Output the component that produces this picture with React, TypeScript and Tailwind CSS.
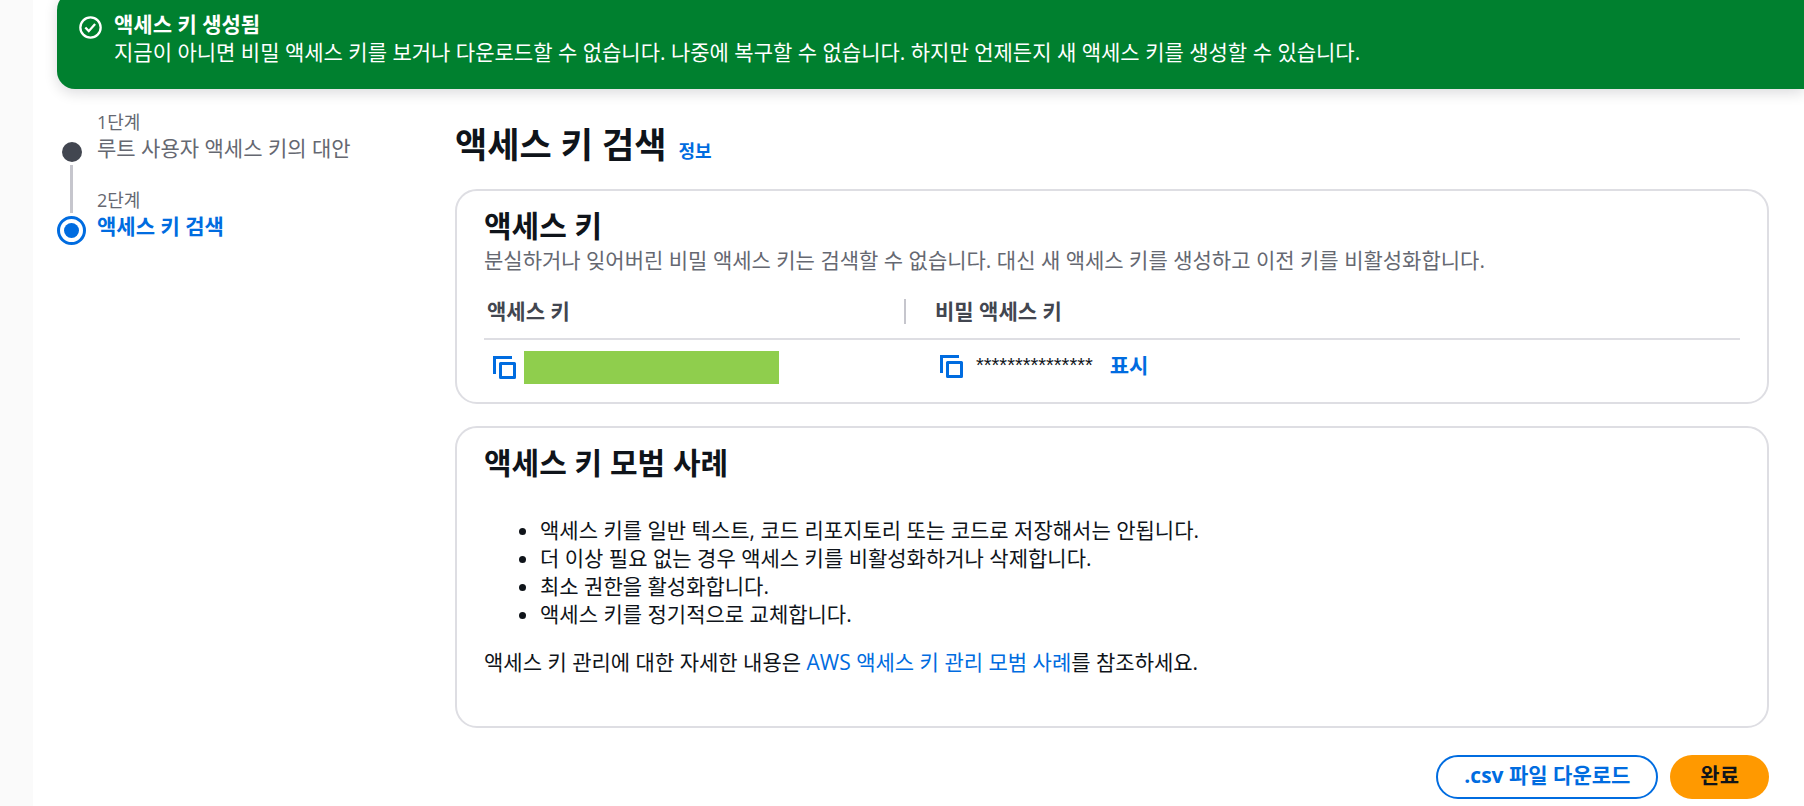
import type { ReactNode } from "react";

const practices = [
  "액세스 키를 일반 텍스트, 코드 리포지토리 또는 코드로 저장해서는 안됩니다.",
  "더 이상 필요 없는 경우 액세스 키를 비활성화하거나 삭제합니다.",
  "최소 권한을 활성화합니다.",
  "액세스 키를 정기적으로 교체합니다.",
];

function CopyButton({ label }: { label: string }) {
  return (
    <button type="button" aria-label={label} className="shrink-0 text-[#006ce0]">
      <svg width="24" height="24" viewBox="0 0 24 24" fill="none" stroke="currentColor" strokeWidth="3">
        <path d="M1.5 18V1.5H19" />
        <path d="M7.5 7.5h14v14h-14z" strokeLinejoin="round" />
      </svg>
    </button>
  );
}

function Card({ children }: { children: ReactNode }) {
  return (
    <section className="rounded-[22px] border-2 border-[#dedee3] bg-white px-[27px]">
      {children}
    </section>
  );
}

function Banner() {
  return (
    <div
      role="status"
      className="-mt-2 flex gap-3 rounded-l-[18px] bg-[#00802f] pt-[18px] pb-[23px] pl-[22px] text-white shadow-[0_4px_14px_rgba(0,7,22,0.14)]"
    >
      <svg className="mt-1.5 shrink-0" width="23" height="23" viewBox="0 0 24 24" fill="none" stroke="currentColor" strokeWidth="2.4">
        <circle cx="12" cy="12" r="10.6" />
        <path d="M6.6 12l3.6 3.8 6.6-7.4" />
      </svg>
      <div>
        <h2 className="font-bold">액세스 키 생성됨</h2>
        <p>
          지금이 아니면 비밀 액세스 키를 보거나 다운로드할 수 없습니다. 나중에 복구할 수 없습니다. 하지만 언제든지 새
          액세스 키를 생성할 수 있습니다.
        </p>
      </div>
    </div>
  );
}

function Steps() {
  return (
    <nav aria-label="단계" className="flex w-[398px] shrink-0 gap-[11px] pt-[21px]">
      <div className="flex w-[29px] flex-col items-center pt-8">
        <span className="size-5 rounded-full bg-[#424650]" />
        <span className="my-[3px] h-12 w-[3px] bg-[#c6c6cd]" />
        <span className="flex size-[29px] items-center justify-center rounded-full border-[3px] border-[#006ce0]">
          <span className="size-[15px] rounded-full bg-[#006ce0]" />
        </span>
      </div>
      <ol className="flex flex-col gap-[26px] text-[#656871]">
        <li>
          <div className="text-[18px] leading-6">1단계</div>
          <div>루트 사용자 액세스 키의 대안</div>
        </li>
        <li aria-current="step">
          <div className="text-[18px] leading-6">2단계</div>
          <div className="font-bold text-[#006ce0]">액세스 키 검색</div>
        </li>
      </ol>
    </nav>
  );
}

function KeyTable() {
  return (
    <table className="mt-[23px] w-full table-fixed text-left">
      <thead>
        <tr className="border-b-2 border-[#dedee3] text-[#424650]">
          <th className="w-[422px] pb-[13px] pl-[3px] font-bold">
            <div className="flex items-center justify-between">
              액세스 키
              <span className="h-[25px] w-0.5 bg-[#c6c6cd]" />
            </div>
          </th>
          <th className="pb-[13px] pl-[29px] font-bold">비밀 액세스 키</th>
        </tr>
      </thead>
      <tbody>
        <tr>
          <td className="pt-[11px] pb-[18px] pl-[9px]">
            <div className="flex items-center gap-[7px]">
              <CopyButton label="액세스 키 복사" />
              <div className="h-[33px] w-[255px] bg-[#8fce4d]" />
            </div>
          </td>
          <td className="pt-2.5 pb-[19px] pl-[34px]">
            <div className="flex items-center">
              <CopyButton label="비밀 액세스 키 복사" />
              <span className="ml-3 pb-1 font-['Liberation_Sans',sans-serif] text-[20px]">***************</span>
              <button type="button" className="ml-[17px] pb-1 font-bold text-[#006ce0]">
                표시
              </button>
            </div>
          </td>
        </tr>
      </tbody>
    </table>
  );
}

export default function App() {
  return (
    <div className="flex min-h-screen overflow-hidden bg-white font-['Open_Sans','Noto_Sans_CJK_KR',sans-serif] text-[21px] leading-7 text-[#0f141a]">
      <aside className="w-[33px] shrink-0 bg-[#fafafa]" />
      <div className="min-w-0 flex-1 pl-6">
        <Banner />
        <div className="flex pr-[35px]">
          <Steps />
          <main className="min-w-0 flex-1 pt-8">
            <div className="flex items-baseline gap-3">
              <h1 className="text-[35px] leading-[48px] font-bold">액세스 키 검색</h1>
              <a href="#info" className="text-[18px] font-semibold text-[#006ce0]">
                정보
              </a>
            </div>
            <div className="mt-5 flex flex-col gap-[22px]">
              <Card>
                <h2 className="pt-[17px] pb-0.5 text-[30px] leading-9 font-bold">액세스 키</h2>
                <p className="text-[#656871]">
                  분실하거나 잊어버린 비밀 액세스 키는 검색할 수 없습니다. 대신 새 액세스 키를 생성하고 이전 키를
                  비활성화합니다.
                </p>
                <KeyTable />
              </Card>
              <Card>
                <h2 className="pt-[17px] pb-0.5 text-[30px] leading-9 font-bold">액세스 키 모범 사례</h2>
                <ul className="mt-[33px] list-disc pl-14">
                  {practices.map((item) => (
                    <li key={item}>{item}</li>
                  ))}
                </ul>
                <p className="mt-5 pb-[50px]">
                  액세스 키 관리에 대한 자세한 내용은{" "}
                  <a href="#best-practices" className="text-[#006ce0]">
                    AWS 액세스 키 관리 모범 사례
                  </a>
                  를 참조하세요.
                </p>
              </Card>
            </div>
            <div className="mt-[27px] flex justify-end gap-3 pb-1.5">
              <button
                type="button"
                className="h-11 rounded-full border-2 border-[#006ce0] px-[26px] pb-1 font-bold text-[#006ce0]"
              >
                .csv 파일 다운로드
              </button>
              <button type="button" className="h-11 rounded-full bg-[#ff9900] px-[30px] pb-1 font-bold">
                완료
              </button>
            </div>
          </main>
        </div>
      </div>
    </div>
  );
}
